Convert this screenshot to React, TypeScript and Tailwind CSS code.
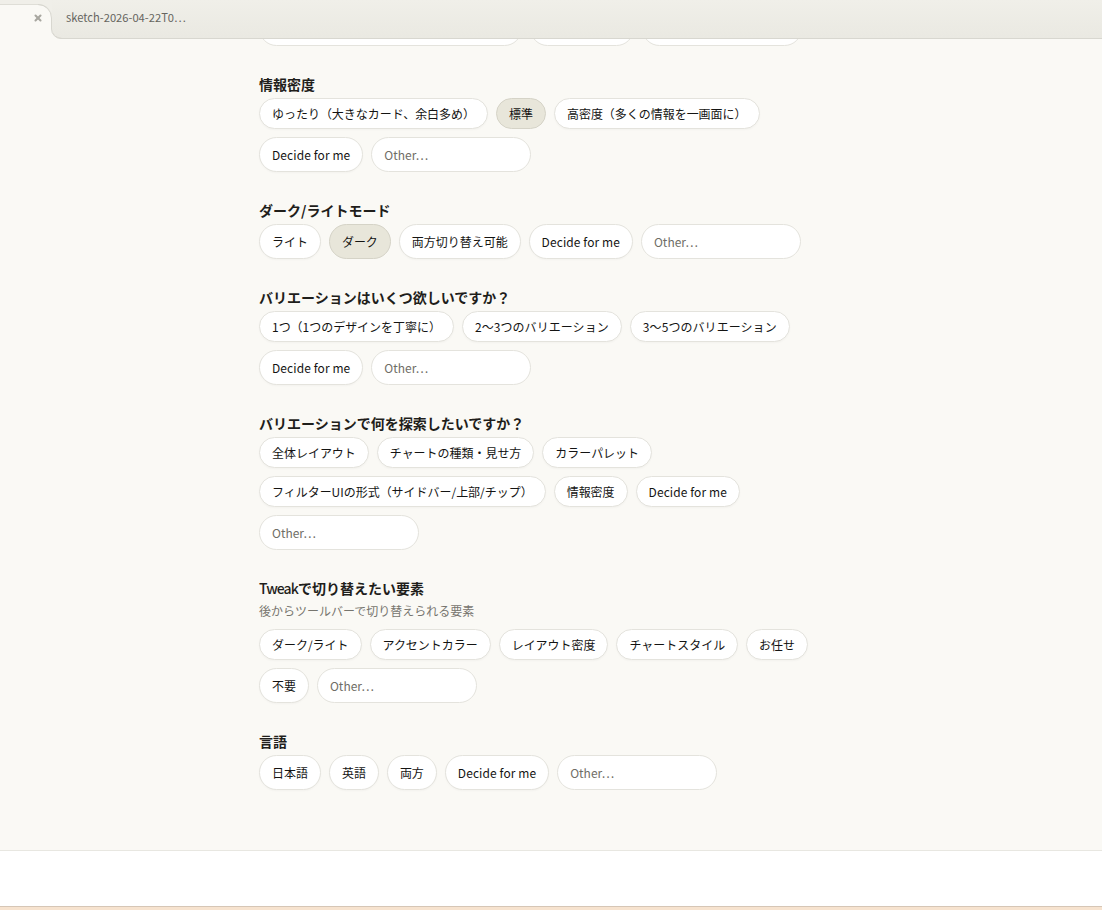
import { X } from 'lucide-react';
import type { ReactNode } from 'react';

type Section = {
  title: ReactNode;
  note?: string;
  options: string[];
  selected?: string;
};

const sections: Section[] = [
  {
    title: '情報密度',
    options: ['ゆったり（大きなカード、余白多め）', '標準', '高密度（多くの情報を一画面に）', 'Decide for me'],
    selected: '標準',
  },
  {
    title: 'ダーク/ライトモード',
    options: ['ライト', 'ダーク', '両方切り替え可能', 'Decide for me'],
    selected: 'ダーク',
  },
  {
    title: 'バリエーションはいくつ欲しいですか？',
    options: ['1つ（1つのデザインを丁寧に）', '2〜3つのバリエーション', '3〜5つのバリエーション', 'Decide for me'],
  },
  {
    title: 'バリエーションで何を探索したいですか？',
    options: ['全体レイアウト', 'チャートの種類・見せ方', 'カラーパレット', 'フィルターUIの形式（サイドバー/上部/チップ）', '情報密度', 'Decide for me'],
  },
  {
    title: (
      <>
        <span className="font-medium tracking-[-0.9px]">Tweak</span>で切り替えたい要素
      </>
    ),
    note: '後からツールバーで切り替えられる要素',
    options: ['ダーク/ライト', 'アクセントカラー', 'レイアウト密度', 'チャートスタイル', 'お任せ', '不要'],
  },
  {
    title: '言語',
    options: ['日本語', '英語', '両方', 'Decide for me'],
  },
];

function Chip({ label, active }: { label: string; active?: boolean }) {
  return (
    <button
      className={clsx(
        'px-3 py-[6px] rounded-full border text-[11.97px] leading-[17px] text-[#141413] whitespace-nowrap',
        active
          ? 'border-[#d5d3c7] bg-[#e8e6da]'
          : 'border-[#e4e3dd] bg-white shadow-[0_1px_2px_rgba(0,0,0,0.03)]',
        (label === 'Decide for me' || label.includes('つのバリエーション')) && 'tracking-[0.1px]'
      )}
    >
      {label}
    </button>
  );
}

function OtherInput() {
  return (
    <input
      placeholder="Other…"
      className="w-40 h-[35px] px-3 rounded-full border border-[#e4e3dd] bg-white text-[12px] outline-none placeholder:text-[#6f6d66]"
    />
  );
}

export default function App() {
  return (
    <div className="w-[1102px] h-[910px] overflow-hidden flex flex-col bg-white font-['Noto_Sans_CJK_JP',sans-serif]">
      {/* Tab strip */}
      <div className="h-[39px] shrink-0 flex bg-[#faf9f5] relative z-10">
        <div className="w-[52px] bg-[#f0efe9]">
          <div className="h-[35px] mt-1 bg-[#faf9f5] rounded-tr-[14px] border-t border-[#dfded7] flex items-start justify-end pr-[9px] pt-[7px]">
            <X className="w-[10px] h-[10px] mt-[1px] text-[#a8a7a0]" strokeWidth={5} />
          </div>
        </div>
        <div className="flex-1 bg-gradient-to-b from-[#f0efe9] to-[#eae9e2] border-b border-[#d8d7d0] rounded-bl-[10px] pl-[14px] pt-[9px] text-[11.2px] leading-4 text-[#66655f]">
          sketch-2026-04-22T0⋯
        </div>
        {/* edge of the active tab, curving into the strip's bottom line */}
        <svg className="absolute left-0 top-0 w-[70px] h-[39px] pointer-events-none" viewBox="0 0 70 39" fill="none">
          <path d="M38 4.5A13.5 13.5 0 0 1 51.5 18V29A9.5 9.5 0 0 0 61 38.5H64" stroke="#d8d7d0" />
        </svg>
      </div>

      {/* Scrolled form */}
      <div className="h-[812px] shrink-0 overflow-hidden bg-[#faf9f5] border-b border-[#e8e7e1]">
        <div className="pl-[259px] w-[820px] -mt-[28px] flex flex-col gap-8">
          {/* row scrolled under the tab strip, only its lower edge shows */}
          <div className="flex gap-2">
            <div className="w-[263px] h-[35px] rounded-full border border-[#e4e3dd] bg-white" />
            <div className="w-[104px] h-[35px] rounded-full border border-[#e4e3dd] bg-white" />
            <div className="w-40 h-[35px] rounded-full border border-[#e4e3dd] bg-white" />
          </div>
          {sections.map((s, i) => (
            <section key={i}>
              <h3 className="text-[14px] leading-3 mb-2 font-bold text-[#1f1e1b]">{s.title}</h3>
              {s.note && <p className="text-[12px] leading-[17px] mt-[8px] mb-[10px] text-[#77756e]">{s.note}</p>}
              <div className="flex flex-wrap gap-2">
                {s.options.map(o => (
                  <Chip key={o} label={o} active={o === s.selected} />
                ))}
                <OtherInput />
              </div>
            </section>
          ))}
        </div>
      </div>

      <div className="flex-1 bg-white" />
      <div className="h-[4px] shrink-0 bg-[#f7e3cf] border-t border-[#d6c6b6]" />
    </div>
  );
}

function clsx(...parts: (string | false | undefined)[]) {
  return parts.filter(Boolean).join(' ');
}
